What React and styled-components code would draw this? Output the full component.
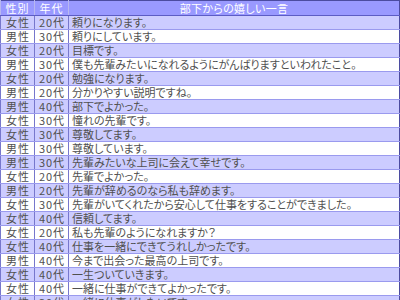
import React from 'react';
import styled, { createGlobalStyle } from 'styled-components';

const rows = [
  ['女性', '20代', '頼りになります。'],
  ['男性', '30代', '頼りにしています。'],
  ['女性', '20代', '目標です。'],
  ['男性', '30代', '僕も先輩みたいになれるようにがんばりますといわれたこと。'],
  ['女性', '20代', '勉強になります。'],
  ['男性', '20代', '分かりやすい説明ですね。'],
  ['男性', '40代', '部下でよかった。'],
  ['女性', '30代', '憧れの先輩です。'],
  ['女性', '30代', '尊敬してます。'],
  ['男性', '30代', '尊敬しています。'],
  ['男性', '30代', '先輩みたいな上司に会えて幸せです。'],
  ['女性', '20代', '先輩でよかった。'],
  ['男性', '20代', '先輩が辞めるのなら私も辞めます。'],
  ['女性', '30代', '先輩がいてくれたから安心して仕事をすることができました。'],
  ['女性', '40代', '信頼してます。'],
  ['女性', '20代', '私も先輩のようになれますか？'],
  ['女性', '40代', '仕事を一緒にできてうれしかったです。'],
  ['男性', '40代', '今まで出会った最高の上司です。'],
  ['女性', '40代', '一生ついていきます。'],
  ['女性', '40代', '一緒に仕事ができてよかったです。'],
  ['女性', '30代', '一緒に仕事がしたいです。'],
];

export default function App() {
  return (
    <>
      <GlobalStyle />
      <Table>
        <colgroup>
          <col style={{ width: 34 }} />
          <col style={{ width: 34 }} />
          <col />
        </colgroup>
        <thead>
          <tr>
            <Th $spaced>性別</Th>
            <Th $spaced>年代</Th>
            <Th>部下からの嬉しい一言</Th>
          </tr>
        </thead>
        <tbody>
          {rows.map(([sex, age, words], i) => (
            <Row key={i} $odd={i % 2 === 0}>
              <Cell $center>{sex}</Cell>
              <Cell $center>{age}</Cell>
              <Cell>{words}</Cell>
            </Row>
          ))}
        </tbody>
      </Table>
    </>
  );
}

const GlobalStyle = createGlobalStyle`
  html, body {
    margin: 0;
    padding: 0;
    background: #ffffff;
    overflow: hidden;
  }
  body {
    font-family: "Noto Sans CJK JP", "Noto Sans", sans-serif;
  }
`;

const Table = styled.table`
  width: 400px;
  table-layout: fixed;
  border-collapse: collapse;
  border: 1px solid #4b4ba0;
  font-size: 11px;
  font-feature-settings: "palt";
`;

const Th = styled.th`
  height: 14px;
  padding: 0;
  background: #9999ff;
  color: #ffffff;
  font-weight: normal;
  line-height: 14px;
  letter-spacing: ${p => (p.$spaced ? '1px' : '0.3px')};
  text-align: center;
  border-bottom: 1px solid #5c5cc4;
  border-left: 1px solid #b8b8f0;
`;

const Row = styled.tr`
  background: ${p => (p.$odd ? '#ccccff' : '#ffffff')};
`;

const Cell = styled.td`
  height: 13px;
  padding: 0 0 0 ${p => (p.$center ? '1px' : '3px')};
  line-height: 13px;
  color: #505050;
  letter-spacing: ${p => (p.$center ? '1px' : '0')};
  white-space: nowrap;
  overflow: hidden;
  text-align: ${p => (p.$center ? 'center' : 'left')};
  border-bottom: 1px solid #9a9aee;
  border-left: 1px solid #7777cc;
`;
